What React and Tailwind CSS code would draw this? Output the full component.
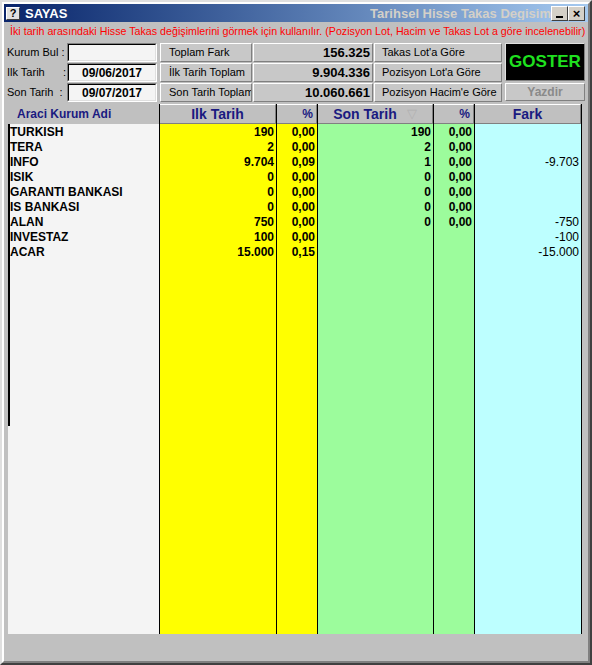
import React from "react";

const rows = [
  ["TURKISH", "190", "0,00", "190", "0,00", ""],
  ["TERA", "2", "0,00", "2", "0,00", ""],
  ["INFO", "9.704", "0,09", "1", "0,00", "-9.703"],
  ["ISIK", "0", "0,00", "0", "0,00", ""],
  ["GARANTI BANKASI", "0", "0,00", "0", "0,00", ""],
  ["IS BANKASI", "0", "0,00", "0", "0,00", ""],
  ["ALAN", "750", "0,00", "0", "0,00", "-750"],
  ["INVESTAZ", "100", "0,00", "", "", "-100"],
  ["ACAR", "15.000", "0,15", "", "", "-15.000"],
];

const font = { fontFamily: '"Liberation Sans", Arial, sans-serif' };

function Raised({ className = "", children }) {
  return (
    <div
      className={`border border-t-white border-l-white border-r-[#808080] border-b-[#808080] bg-[#c8c8c8] flex items-center ${className}`}
    >
      {children}
    </div>
  );
}

function Sunken({ children }) {
  return (
    <div className="w-[90px] h-[19px] border border-t-[#808080] border-l-[#808080] border-r-white border-b-white">
      <div className="w-full h-full border border-t-black border-l-black border-r-[#dfdfdf] border-b-[#dfdfdf] bg-[#f4f4f4] flex items-center justify-center text-[12px] font-bold text-black">
        {children}
      </div>
    </div>
  );
}

function Column({ title, width, bg, colIndex, bold = true, small = false, left = true, arrow = false }) {
  return (
    <div className={`flex flex-col h-full ${width} ${left ? "border-l border-l-black" : ""}`}>
      <div
        className={`h-[20px] shrink-0 bg-[#c0c0c0] border-t border-t-white border-b border-b-[#808080] border-r border-r-[#808080] flex items-center ${small ? "justify-end pr-[3px]" : "justify-center"} text-[#1a1a80] font-bold ${small ? "text-[12px]" : "text-[14px]"}`}
      >
        {title}
        {arrow && <span className="ml-[10px] text-[#b0b0b0] text-[13px] font-normal">▽</span>}
      </div>
      <div className={`flex-1 ${bg}`}>
        {rows.map((r, i) => (
          <div
            key={i}
            className={`h-[15px] flex items-center justify-end pr-[2px] text-[12px] text-black leading-none ${bold ? "font-bold" : ""}`}
          >
            {r[colIndex]}
          </div>
        ))}
      </div>
    </div>
  );
}

export default function App() {
  return (
    <div
      style={font}
      className="w-[592px] h-[665px] bg-[#c0c0c0] border-2 border-t-[#dfdfdf] border-l-[#dfdfdf] border-r-[#404040] border-b-[#404040] overflow-hidden"
    >
      <div className="w-full h-full border-2 border-t-white border-l-white border-r-[#808080] border-b-[#808080] flex flex-col">
        {/* Title Bar */}
        <div className="h-[18px] shrink-0 bg-gradient-to-r from-[#0a246a] to-[#a6caf0] flex items-center pl-[2px] pr-[3px]">
          <div className="w-[14px] h-[13px] bg-[#e0e0e0] border border-t-white border-l-white border-r-[#404040] border-b-[#404040] flex items-center justify-center text-[11px] font-bold text-black leading-none">
            ?
          </div>
          <span className="ml-[5px] text-white font-bold text-[13px] leading-none">SAYAS</span>
          <span className="ml-auto text-[#d4d0c8] font-bold text-[13px] leading-none whitespace-nowrap overflow-hidden">
            Tarihsel Hisse Takas Degisim
          </span>
          <div className="flex">
            <div className="w-[17px] h-[15px] bg-[#d4d0c8] border border-t-white border-l-white border-r-[#404040] border-b-[#404040] flex items-end justify-center pb-[2px]">
              <div className="w-[7px] h-[2px] bg-black" />
            </div>
            <div className="w-[17px] h-[15px] bg-[#d4d0c8] border border-t-white border-l-white border-r-[#404040] border-b-[#404040] flex items-center justify-center text-[13px] font-bold leading-none text-black">
              ×
            </div>
          </div>
        </div>

        {/* Info line */}
        <div className="h-[19px] shrink-0 flex items-center pl-[6px] text-[10.7px] text-[#ff0000] whitespace-nowrap overflow-hidden">
          İki tarih arasındaki Hisse Takas değişimlerini görmek için kullanılır. (Pozisyon Lot, Hacim ve Takas Lot a göre incelenebilir)
        </div>

        {/* Controls */}
        <div className="flex pl-[3px] pt-[2px] gap-[2px]">
          <div className="flex flex-col gap-[1px] w-[151px]">
            {[
              ["Kurum Bul :", ""],
              ["Ilk Tarih      :", "09/06/2017"],
              ["Son Tarih  :", "09/07/2017"],
            ].map(([l, v], i) => (
              <div key={i} className="flex items-center h-[19px]">
                <span className="w-[60px] text-[11px] text-black whitespace-pre">{l}</span>
                <Sunken>{v}</Sunken>
              </div>
            ))}
          </div>
          <div className="flex flex-col gap-[1px]">
            {[
              ["Toplam Fark", "156.325", "Takas Lot'a Göre"],
              ["İlk Tarih Toplam", "9.904.336", "Pozisyon Lot'a Göre"],
              ["Son Tarih Toplam", "10.060.661", "Pozisyon Hacim'e Göre"],
            ].map(([a, b, c], i) => (
              <div key={i} className="flex h-[19px] gap-[1px]">
                <Raised className="w-[92px] pl-[8px] text-[11px] text-black whitespace-nowrap overflow-hidden">
                  {a}
                </Raised>
                <Raised className="w-[120px] justify-end pr-[2px] text-[13px] font-bold text-black">{b}</Raised>
                <Raised className="w-[128px] pl-[7px] text-[11px] text-black">{c}</Raised>
              </div>
            ))}
          </div>
          <div className="flex flex-col ml-[1px] gap-[2px]">
            <div className="w-[80px] h-[38px] bg-black border border-t-[#e0e0e0] border-l-[#e0e0e0] border-r-[#808080] border-b-[#808080] flex items-center justify-center text-[#1fe01f] font-bold text-[17px]">
              GOSTER
            </div>
            <Raised className="w-[80px] h-[18px] justify-center text-[12px] font-bold text-[#8a8a8a]">Yazdir</Raised>
          </div>
        </div>

        {/* Grid */}
        <div className="flex ml-[4px] mt-[2px] h-[530px] w-[574px]">
          <div className="flex flex-col h-full w-[151px]">
            <div className="h-[20px] shrink-0 bg-[#c0c0c0] flex items-center pl-[9px] text-[#1a1a80] font-bold text-[12px]">
              Araci Kurum Adi
            </div>
            <div className="flex-1 bg-[#f4f4f4] flex">
              <div className="w-[2px] h-[302px] bg-black" />
              <div className="flex-1">
                {rows.map((r, i) => (
                  <div key={i} className="h-[15px] flex items-center text-[12px] font-bold text-black leading-none">
                    {r[0]}
                  </div>
                ))}
              </div>
            </div>
          </div>
          <Column title="Ilk Tarih" width="w-[117px]" bg="bg-[#ffff00]" colIndex={1} />
          <Column title="%" width="w-[41px]" bg="bg-[#ffff00]" colIndex={2} small />
          <Column title="Son Tarih" width="w-[116px]" bg="bg-[#9cfc9c]" colIndex={3} arrow />
          <Column title="%" width="w-[41px]" bg="bg-[#9cfc9c]" colIndex={4} small />
          <div className="border-r border-r-black">
            <Column title="Fark" width="w-[107px]" bg="bg-[#bdffff]" colIndex={5} bold={false} />
          </div>
        </div>
      </div>
    </div>
  );
}
